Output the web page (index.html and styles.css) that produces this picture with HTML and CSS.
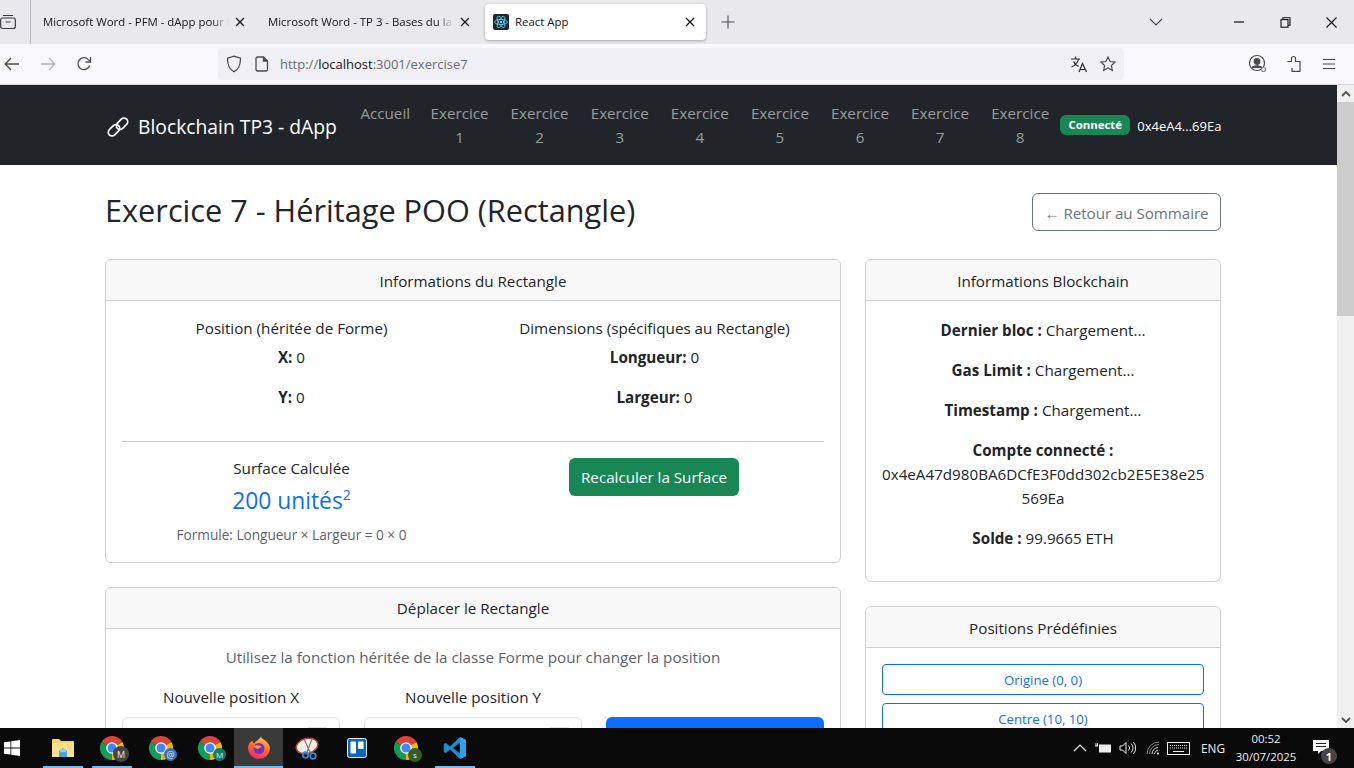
FILE: index.html
```html
<!DOCTYPE html>
<html lang="fr">
<head>
<meta charset="utf-8">
<title>React App</title>
<link rel="stylesheet" href="styles.css">
</head>
<body>
<svg class="defs" width="0" height="0">
  <symbol id="chrome" viewBox="0 0 24 24">
    <path fill="#db4437" d="M12 12L1.600 6A12 12 0 0 1 22.400 6Z"/>
    <path fill="#f4b400" d="M12 12L22.400 6A12 12 0 0 1 12 24Z"/>
    <path fill="#0f9d58" d="M12 12L12 24A12 12 0 0 1 1.600 6Z"/>
    <circle cx="12" cy="12" r="5.800" fill="#fff"/>
    <circle cx="12" cy="12" r="4.500" fill="#4285f4"/>
  </symbol>
  <symbol id="close" viewBox="0 0 10 10">
    <path d="M1 1L9 9M9 1L1 9" stroke="#15141a" stroke-width="1.300" fill="none"/>
  </symbol>
</svg>

<header class="tabstrip">
  <div class="tabs-all">
    <svg width="16" height="16" viewBox="0 0 16 16" fill="none" stroke="#3a3a40" stroke-width="1.200"><rect x="0.700" y="4" width="14.600" height="10.500" rx="2"/><path d="M3 1.500h10M5.500 8h5"/></svg>
  </div>
  <div class="tab">
    <span class="tab-title">Microsoft Word - PFM - dApp pour l</span>
    <svg class="tab-x" width="10" height="10"><use href="#close"/></svg>
  </div>
  <div class="tab">
    <span class="tab-title">Microsoft Word - TP 3 - Bases du la</span>
    <svg class="tab-x" width="10" height="10"><use href="#close"/></svg>
  </div>
  <div class="tab tab-active">
    <svg class="favicon" width="16" height="16" viewBox="0 0 16 16">
      <rect width="16" height="16" rx="2" fill="#20232a"/>
      <g fill="none" stroke="#61dafb" stroke-width="0.800"><ellipse cx="8" cy="8" rx="6.400" ry="2.600"/><ellipse cx="8" cy="8" rx="6.400" ry="2.600" transform="rotate(60 8 8)"/><ellipse cx="8" cy="8" rx="6.400" ry="2.600" transform="rotate(120 8 8)"/></g>
      <circle cx="8" cy="8" r="1.300" fill="#61dafb"/>
    </svg>
    <span class="tab-title">React App</span>
    <svg class="tab-x" width="10" height="10"><use href="#close"/></svg>
  </div>
  <div class="newtab">
    <svg width="14" height="14" viewBox="0 0 14 14"><path d="M7 0.500v13M0.500 7h13" stroke="#4a4a50" stroke-width="1.100"/></svg>
  </div>
  <div class="spacer"></div>
  <div class="tabs-list">
    <svg width="14" height="8" viewBox="0 0 14 8"><path d="M1 1l6 6 6-6" stroke="#4a4a50" stroke-width="1.100" fill="none"/></svg>
  </div>
  <div class="winbtn"><svg width="10" height="10" viewBox="0 0 10 10"><path d="M0 5h10" stroke="#111" stroke-width="1.200"/></svg></div>
  <div class="winbtn"><svg width="11" height="11" viewBox="0 0 11 11" fill="none" stroke="#111" stroke-width="1.100"><rect x="1" y="2.600" width="7" height="7.600"/><path d="M3 2.600V0.700h7v7.600H8"/></svg></div>
  <div class="winbtn"><svg width="11" height="11" viewBox="0 0 11 11"><path d="M0.500 0.500l10 10M10.500 0.500l-10 10" stroke="#111" stroke-width="1.100"/></svg></div>
</header>

<div class="toolbar">
  <svg class="tool" width="16" height="14" viewBox="0 0 16 14" fill="none" stroke="#4a4a50" stroke-width="1.300"><path d="M15 7H1.500M7 1L1.200 7 7 13"/></svg>
  <svg class="tool tool-next" width="16" height="14" viewBox="0 0 16 14" fill="none" stroke="#b4b4b8" stroke-width="1.300"><path d="M1 7h13.500M9 1l5.800 6L9 13"/></svg>
  <svg class="tool tool-reload" width="16" height="16" viewBox="0 0 16 16" fill="none" stroke="#4a4a50" stroke-width="1.300"><path d="M13.700 9.500A6 6 0 1 1 12.400 3.600L14.200 5.400"/><path d="M14.500 1v5h-5"/></svg>
  <div class="urlbar">
    <svg width="16" height="18" viewBox="0 0 16 18" fill="none" stroke="#4a4a50" stroke-width="1.300"><path d="M8 1.200l6.500 2c0 7-1.400 10.800-6.500 13.600C2.900 14 1.500 10.200 1.500 3.200z"/></svg>
    <svg class="url-page" width="14" height="16" viewBox="0 0 14 16" fill="none" stroke="#4a4a50" stroke-width="1.300"><path d="M2.500 1h6l4 4v8.500a1.500 1.500 0 0 1-1.500 1.500H2.500A1.500 1.500 0 0 1 1 13.500v-11A1.500 1.500 0 0 1 2.500 1z"/><path d="M8.500 1v4h4" fill="#4a4a50"/></svg>
    <span class="url-text">http://<b class="url-host">localhost</b>:3001/exercise7</span>
    <div class="spacer"></div>
    <svg class="url-translate" width="18" height="18" viewBox="0 0 18 18" fill="none" stroke="#2b2b30" stroke-width="1.200"><path d="M1 4h9M5.500 1.500V4M8.500 4C7.800 7.500 5 10.500 1.500 12M3.500 6.500c1 2.500 3 4 5 5"/><path d="M9 17l3.500-8.500L16.500 17M10.200 14.500h5"/></svg>
    <svg width="16" height="16" viewBox="0 0 16 16" fill="none" stroke="#4a4a50" stroke-width="1.200"><path d="M8 1l2.100 4.500 4.900.6-3.600 3.400.9 4.900L8 11.900 3.700 14.400l.9-4.900L1 6.100l4.900-.6z"/></svg>
  </div>
  <svg class="tool-account" width="20" height="20" viewBox="0 0 20 20" fill="none" stroke="#4a4a50" stroke-width="1.200"><circle cx="9" cy="9" r="7.500"/><circle cx="9" cy="7.500" r="2.800" fill="#4a4a50"/><path d="M4 14c1-3 9-3 10 0" fill="#4a4a50"/><circle cx="15.500" cy="15.500" r="2" fill="#f9f9fb" stroke="#8a8a90"/></svg>
  <svg class="tool-ext" width="16" height="18" viewBox="0 0 16 18" fill="none" stroke="#4a4a50" stroke-width="1.200"><path d="M1.500 6.500h4V3.500a2 2 0 0 1 4 0v3h4.500v9.800H6V13"/></svg>
  <svg class="tool-menu" width="12" height="12" viewBox="0 0 12 12" stroke="#4a4a50" stroke-width="1.200"><path d="M0 1.500h12M0 6h12M0 10.500h12"/></svg>
</div>

<div class="viewport">
  <div class="page">
    <nav class="navbar">
      <a class="brand">
        <svg width="22" height="22" viewBox="0 0 22 22" fill="none" stroke="#fff" stroke-width="1.700"><rect x="0.500" y="10.500" width="13" height="7.500" rx="3.750" transform="rotate(-45 7 14.250)"/><rect x="8.500" y="4" width="13" height="7.500" rx="3.750" transform="rotate(-45 15 7.750)"/></svg>
        <span>Blockchain TP3 - dApp</span>
      </a>
      <a class="nav-link nav-home">Accueil</a>
      <a class="nav-link">Exercice 1</a>
      <a class="nav-link">Exercice 2</a>
      <a class="nav-link">Exercice 3</a>
      <a class="nav-link">Exercice 4</a>
      <a class="nav-link">Exercice 5</a>
      <a class="nav-link">Exercice 6</a>
      <a class="nav-link">Exercice 7</a>
      <a class="nav-link">Exercice 8</a>
      <span class="badge">Connecté</span>
      <span class="nav-addr">0x4eA4...69Ea</span>
    </nav>

    <main class="main">
      <div class="title-row">
        <h1 class="title">Exercice 7 - Héritage POO (Rectangle)</h1>
        <a class="btn btn-back">← Retour au Sommaire</a>
      </div>

      <div class="layout">
        <div class="column">
          <section class="card">
            <div class="card-header">Informations du Rectangle</div>
            <div class="card-body">
              <div class="two-col">
                <div class="col-center">
                  <h6 class="sub">Position (héritée de Forme)</h6>
                  <p class="stat"><strong>X:</strong> 0</p>
                  <p class="stat"><strong>Y:</strong> 0</p>
                </div>
                <div class="col-center">
                  <h6 class="sub">Dimensions (spécifiques au Rectangle)</h6>
                  <p class="stat"><strong>Longueur:</strong> 0</p>
                  <p class="stat"><strong>Largeur:</strong> 0</p>
                </div>
              </div>
              <hr class="rule">
              <div class="two-col">
                <div class="col-center">
                  <h6 class="sub sub-tight">Surface Calculée</h6>
                  <div class="surface">200 unités<sup class="sq">2</sup></div>
                  <p class="formula">Formule: Longueur × Largeur = 0 × 0</p>
                </div>
                <div class="col-center">
                  <a class="btn btn-green">Recalculer la Surface</a>
                </div>
              </div>
            </div>
          </section>

          <section class="card">
            <div class="card-header card-header-up">Déplacer le Rectangle</div>
            <div class="card-body">
              <p class="lead-muted">Utilisez la fonction héritée de la classe Forme pour changer la position</p>
              <div class="three-col">
                <div class="field">
                  <label class="field-label">Nouvelle position X</label>
                  <div class="input"><span class="spin"></span></div>
                </div>
                <div class="field">
                  <label class="field-label">Nouvelle position Y</label>
                  <div class="input"><span class="spin"></span></div>
                </div>
                <div class="field field-end">
                  <div class="btn-primary"></div>
                </div>
              </div>
            </div>
          </section>
        </div>

        <div class="column">
          <section class="card">
            <div class="card-header">Informations Blockchain</div>
            <div class="card-body chain">
              <p><strong>Dernier bloc :</strong> Chargement...</p>
              <p><strong>Gas Limit :</strong> Chargement...</p>
              <p><strong>Timestamp :</strong> Chargement...</p>
              <p><strong>Compte connecté :</strong><br>0x4eA47d980BA6DCfE3F0dd302cb2E5E38e25<br>569Ea</p>
              <p><strong>Solde :</strong> 99.9665 ETH</p>
            </div>
          </section>

          <section class="card">
            <div class="card-header">Positions Prédéfinies</div>
            <div class="card-body presets">
              <a class="btn-preset">Origine (0, 0)</a>
              <a class="btn-preset">Centre (10, 10)</a>
            </div>
          </section>
        </div>
      </div>
    </main>
  </div>

  <div class="scrollbar">
    <div class="sb-arrow"><svg width="10" height="6" viewBox="0 0 10 6"><path d="M1 5l4-4 4 4" stroke="#505050" stroke-width="1.800" fill="none"/></svg></div>
    <div class="sb-thumb"></div>
    <div class="spacer"></div>
    <div class="sb-arrow"><svg width="10" height="6" viewBox="0 0 10 6"><path d="M1 1l4 4 4-4" stroke="#505050" stroke-width="1.800" fill="none"/></svg></div>
  </div>
</div>

<footer class="taskbar">
  <div class="tb-start">
    <svg width="16" height="16" viewBox="0 0 16 16" fill="#fff"><path d="M0 2.300l6.500-.9v6.200H0zM7.300 1.300L16 0v7.600H7.300zM0 8.400h6.500v6.200L0 13.700zM7.300 8.400H16V16l-8.700-1.200z"/></svg>
  </div>
  <div class="tb-item tb-run">
    <svg width="22" height="20" viewBox="0 0 22 20"><path d="M0 2a1 1 0 0 1 1-1h6l2 2h12a1 1 0 0 1 1 1v15H0z" fill="#f5d36e"/><rect y="5" width="22" height="14" fill="#fbe08a"/><path d="M7 19v-6l4-3 4 3v6z" fill="#4aa8e0"/><rect x="8" y="11" width="6" height="3" fill="#8fd0f5"/></svg>
  </div>
  <div class="tb-item tb-run">
    <svg width="24" height="24"><use href="#chrome"/></svg>
    <span class="tb-dot dot-grey">M</span>
  </div>
  <div class="tb-item">
    <svg width="24" height="24"><use href="#chrome"/></svg>
    <span class="tb-dot dot-blue">@</span>
  </div>
  <div class="tb-item">
    <svg width="24" height="24"><use href="#chrome"/></svg>
    <span class="tb-dot dot-teal">M</span>
  </div>
  <div class="tb-item tb-run tb-active">
    <svg width="24" height="24" viewBox="0 0 24 24">
      <defs><linearGradient id="ff" x1="0.700" y1="0" x2="0.300" y2="1"><stop offset="0" stop-color="#ffd23a"/><stop offset="0.500" stop-color="#ff6a2b"/><stop offset="1" stop-color="#f0296b"/></linearGradient></defs>
      <path d="M12 23A11 11 0 0 1 1.500 9C2.500 7 4 5 5.500 4.500 5.500 6 6 7 7 7.500 8.500 5 12 4 14 0.500c1 2.500 2 2.500 4 4 3 2 5 5 5 8A11 11 0 0 1 12 23z" fill="url(#ff)"/>
      <circle cx="12" cy="12.500" r="5.500" fill="#7b2bc9"/>
      <path d="M6.500 10c3-1.500 7-1 9 1.500-2-.5-3.500 0-4 1.500-2.500 0-4-1-5-3z" fill="#ff9a2b"/>
    </svg>
  </div>
  <div class="tb-item">
    <svg width="26" height="26" viewBox="0 0 26 26"><ellipse cx="12" cy="11" rx="11" ry="7.500" transform="rotate(-15 12 11)" fill="#f3efe8" stroke="#b5413f" stroke-width="1.500"/><path d="M9 4l6 13M17 4l-5 13" stroke="#777" stroke-width="1.200"/><circle cx="10.500" cy="20" r="2.800" fill="none" stroke="#2b8ed6" stroke-width="1.800"/><circle cx="18" cy="21" r="2.800" fill="none" stroke="#2b8ed6" stroke-width="1.800"/></svg>
  </div>
  <div class="tb-item">
    <svg width="20" height="20" viewBox="0 0 20 20"><rect x="0.500" y="0.500" width="19" height="19" rx="2" fill="#0d66c2" stroke="#e8f1fb"/><rect x="3.500" y="3.500" width="5.500" height="12" rx="0.800" fill="#fff"/><rect x="11" y="3.500" width="5.500" height="7.500" rx="0.800" fill="#fff"/></svg>
  </div>
  <div class="tb-item">
    <svg width="24" height="24"><use href="#chrome"/></svg>
    <span class="tb-dot dot-green">s</span>
  </div>
  <div class="tb-item tb-run">
    <svg width="24" height="24" viewBox="0 0 24 24"><path d="M17 1l6 3v16l-6 3L7 13.500 2.800 17 .8 16V8l2-1L7 10.500z" fill="#1f8ad2"/><path d="M17 6.500L10 12l7 5.500z" fill="#0a0a0a"/><path d="M17 1l6 3v16l-6 3z" fill="#2aa4f0"/></svg>
  </div>
  <div class="spacer"></div>
  <div class="tray">
    <svg class="tray-caret" width="14" height="8" viewBox="0 0 14 8"><path d="M1 7l6-6 6 6" stroke="#eee" stroke-width="1.200" fill="none"/></svg>
    <svg class="tray-batt" width="17" height="12" viewBox="0 0 17 12"><rect x="4" y="2.500" width="12" height="8" fill="#eee"/><path d="M0 4h3M1 1v3M2.500 1v3" stroke="#eee"/></svg>
    <svg class="tray-vol" width="17" height="14" viewBox="0 0 17 14" fill="none" stroke="#eee"><path d="M1 5h2.500L7 1.500v11L3.500 9H1z"/><path d="M9.500 4.500a3.500 3.500 0 0 1 0 5M12 2.500a6 6 0 0 1 0 9M14.200 1a8.500 8.500 0 0 1 0 12"/></svg>
    <svg class="tray-wifi" width="14" height="14" viewBox="0 0 14 14" fill="none" stroke="#aaa"><path d="M1 13A12 12 0 0 1 13 1M3.500 13A9.500 9.500 0 0 1 13 3.500" stroke="#888"/><path d="M6 13a7 7 0 0 1 6-6.500M8.500 13a4.500 4.500 0 0 1 3.500-4" stroke="#ddd"/><circle cx="12" cy="12.500" r="1.100" fill="#eee" stroke="none"/></svg>
    <svg class="tray-kb" width="23" height="13" viewBox="0 0 23 13" fill="none" stroke="#eee"><rect x="0.500" y="0.500" width="22" height="12"/><path d="M3 3.500h17M3 6h17" stroke-dasharray="1 1"/><path d="M6 9.500h11"/></svg>
    <span class="tray-lang">ENG</span>
    <div class="clock"><span>00:52</span><span>30/07/2025</span></div>
    <div class="notif">
      <svg width="16" height="15" viewBox="0 0 16 15"><path d="M0 0h16v11H8l-3 3v-3H0z" fill="#fff"/><path d="M3 3.500h10M3 6.500h10" stroke="#222"/></svg>
      <span class="notif-count">1</span>
    </div>
  </div>
</footer>
</body>
</html>
```

FILE: styles.css
```css
* { box-sizing: border-box; }
html, body { height: 100%; }
body {
  margin: 0;
  height: 768px;
  overflow: hidden;
  display: flex;
  flex-direction: column;
  font-family: "Open Sans", "Noto Sans", sans-serif;
  font-size: 15.2px;
  line-height: 24px;
  color: #212529;
  background: #fff;
}
.defs { position: absolute; }
.spacer { flex: 1; }

/* browser tabs */
.tabstrip { height: 44px; flex: none; display: flex; align-items: center; background: #e9e9ec; font-size: 11.4px; color: #15141a; }
.tabs-all { width: 31px; height: 44px; flex: none; border-right: 1px solid #b9b9bd; display: flex; align-items: center; }
.tab { width: 225px; height: 36px; flex: none; display: flex; align-items: center; padding-left: 12px; }
.tab-title { width: 192px; white-space: nowrap; -webkit-mask-image: linear-gradient(90deg, #000 88%, transparent 97%); mask-image: linear-gradient(90deg, #000 88%, transparent 97%); }
.tab-x { flex: none; }
.tab-active { width: 221px; margin-left: 4px; padding-left: 8px; background: #fff; border-radius: 4px; box-shadow: 0 1px 3px rgba(0,0,0,.3); }
.favicon { flex: none; margin-right: 6px; }
.tab-active .tab-title { width: 170px; -webkit-mask-image: none; mask-image: none; }
.newtab { width: 24px; margin-left: 10px; display: flex; justify-content: center; }
.tabs-list { width: 24px; display: flex; justify-content: center; margin-right: 48px; }
.winbtn { width: 46px; display: flex; justify-content: center; }

/* browser toolbar */
.toolbar { height: 41px; flex: none; display: flex; align-items: center; background: #f9f9fb; border-bottom: 1px solid #d8d8dc; padding: 0 0 1px 4px; }
.tool-next { margin-left: 20px; }
.tool-reload { margin-left: 20px; }
.urlbar { width: 906px; height: 32px; margin-left: 126px; flex: none; display: flex; align-items: center; padding: 0 8px; background: #f0f0f4; border-radius: 4px; }
.url-page { margin-left: 13px; }
.url-text { margin-left: 11px; font-size: 13px; color: #6b6b70; }
.url-host { font-weight: 400; color: #15141a; }
.url-translate { margin-right: 12px; }
.tool-account { margin-left: 124px; }
.tool-ext { margin-left: 18px; }
.tool-menu { margin-left: 21px; }

/* page */
.viewport { flex: 1; min-height: 0; display: flex; }
.page { flex: 1; min-width: 0; overflow: hidden; }
.navbar { height: 80px; display: flex; align-items: center; padding-left: 107px; background: #212529; }
.brand { width: 244px; flex: none; display: flex; align-items: center; gap: 9px; padding-top: 3px; font-size: 19.3px; color: #fff; }
.nav-link { width: 80.1px; flex: none; padding: 0 10px; text-align: center; color: rgba(255,255,255,.55); }
.nav-home { width: 68.5px; height: 48px; padding: 0; }
.badge { width: 70px; height: 20px; flex: none; display: flex; align-items: center; justify-content: center; background: #198754; border-radius: 6px; color: #fff; font-size: 11.4px; font-weight: 700; line-height: 1; }
.nav-addr { margin-left: 7px; padding-top: 2px; font-size: 13px; color: #fff; white-space: nowrap; }

.main { width: 1116px; margin-left: 105px; padding-top: 28px; }
.title-row { height: 38px; display: flex; align-items: center; justify-content: space-between; }
.title { margin: 0 0 4px; font-size: 30.7px; font-weight: 400; line-height: 34px; white-space: nowrap; }
.btn { height: 38px; display: inline-flex; align-items: center; justify-content: center; border-radius: 6px; white-space: nowrap; }
.btn-back { width: 189px; padding-top: 1px; border: 1px solid #6c757d; color: #6c757d; letter-spacing: -0.06px; }
.btn-green { width: 170px; margin-right: 1px; background: #198754; color: #fff; }

.layout { display: grid; grid-template-columns: 736px 356px; gap: 24px; margin-top: 28px; align-items: start; }
.column { display: flex; flex-direction: column; gap: 24px; }
.card { border: 1px solid #d0d0d0; border-radius: 6px; overflow: hidden; }
.card-header { height: 41px; padding: 9px 16px 7px; text-align: center; background: #f8f8f8; border-bottom: 1px solid #d0d0d0; }
.card-header-up { padding: 8px 16px; }
.card-body { padding: 16px; }

.two-col { display: grid; grid-template-columns: 1fr 1fr; gap: 24px; }
.col-center { text-align: center; }
.sub { margin: 0 0 8px; padding-top: 1px; height: 20px; font-size: 15.2px; font-weight: 400; line-height: 20px; }
.sub-tight { padding-top: 0; }
.stat { margin: 0 0 16px; }
.rule { height: 1px; margin: 16px 0; border: 0; background: #c9c9c9; }
.surface { height: 29px; margin-bottom: 7px; font-size: 22.8px; line-height: 29px; color: #0d6efd; }
.sq { font-size: 14px; line-height: 0; vertical-align: 9px; }
.formula { margin: 0; padding-top: 1px; height: 24px; font-size: 13.6px; color: #5c636a; }

.lead-muted { margin: 0 0 16px; text-align: center; color: #5c636a; }
.three-col { display: grid; grid-template-columns: repeat(3, 218px); gap: 24px; }
.field { text-align: center; }
.field-label { display: block; margin-bottom: 8px; }
.field-end { padding-top: 32px; }
.input { position: relative; height: 38px; border: 1px solid #dee2e6; border-radius: 6px; background: #fff; }
.spin { position: absolute; top: 9px; right: 12px; width: 19px; height: 22px; background: #e6e6e6; }
.btn-primary { height: 38px; background: #0d6efd; border-radius: 6px; }

.chain { text-align: center; padding: 17px 16px 15px; }
.chain p { margin: 0 0 16px; }
.presets { display: flex; flex-direction: column; gap: 8px; }
.btn-preset { height: 31px; display: flex; align-items: center; justify-content: center; border: 1px solid #0d6efd; border-radius: 4px; color: #0d6efd; font-size: 13.2px; }

.scrollbar { width: 17px; flex: none; display: flex; flex-direction: column; background: #f0f0f0; }
.sb-arrow { height: 17px; flex: none; display: flex; align-items: center; justify-content: center; }
.sb-thumb { height: 214px; flex: none; background: #cdcdcd; }

/* taskbar */
.taskbar { height: 40px; flex: none; display: flex; align-items: center; background: #0a0a0a; color: #eee; font-size: 11.4px; }
.tb-start { width: 38px; padding-left: 4px; display: flex; justify-content: flex-start; }
.tb-item { position: relative; width: 49px; height: 40px; flex: none; display: flex; align-items: center; justify-content: center; }
.tb-run::after { content: ""; position: absolute; left: 5px; right: 4px; bottom: 0; height: 2px; background: #76b9ed; }
.tb-active { background: #3a3a3a; }
.tb-active::after { left: 0; right: 0; }
.tb-dot { position: absolute; left: 26px; top: 18px; width: 16px; height: 16px; display: flex; align-items: center; justify-content: center; border-radius: 50%; font-size: 9px; line-height: 1; color: #e8e8e8; }
.dot-grey { background: #444; }
.dot-blue { background: #3a6fc0; left: 28px; top: 20px; width: 13px; height: 13px; }
.dot-teal { background: #0b7f6e; left: 28px; top: 20px; width: 13px; height: 13px; font-size: 8px; }
.dot-green { background: #2c5f23; left: 27px; top: 20px; width: 14px; height: 14px; font-size: 8px; }
.tray { display: flex; align-items: center; height: 40px; }
.tray-batt { margin-left: 8px; }
.tray-vol { margin-left: 7px; }
.tray-wifi { margin-left: 10px; }
.tray-kb { margin-left: 7px; }
.tray-lang { margin-left: 11px; width: 27px; font-size: 11.8px; }
.clock { width: 64px; margin-left: 6px; display: flex; flex-direction: column; align-items: center; line-height: 18px; }
.notif { position: relative; width: 56px; height: 40px; padding: 12px 0 0 15px; display: flex; align-items: flex-start; }
.notif-count { position: absolute; left: 23px; top: 20px; width: 16px; height: 16px; display: flex; align-items: center; justify-content: center; border-radius: 50%; background: #444; color: #fff; font-size: 11px; font-weight: 700; line-height: 1; }
```
